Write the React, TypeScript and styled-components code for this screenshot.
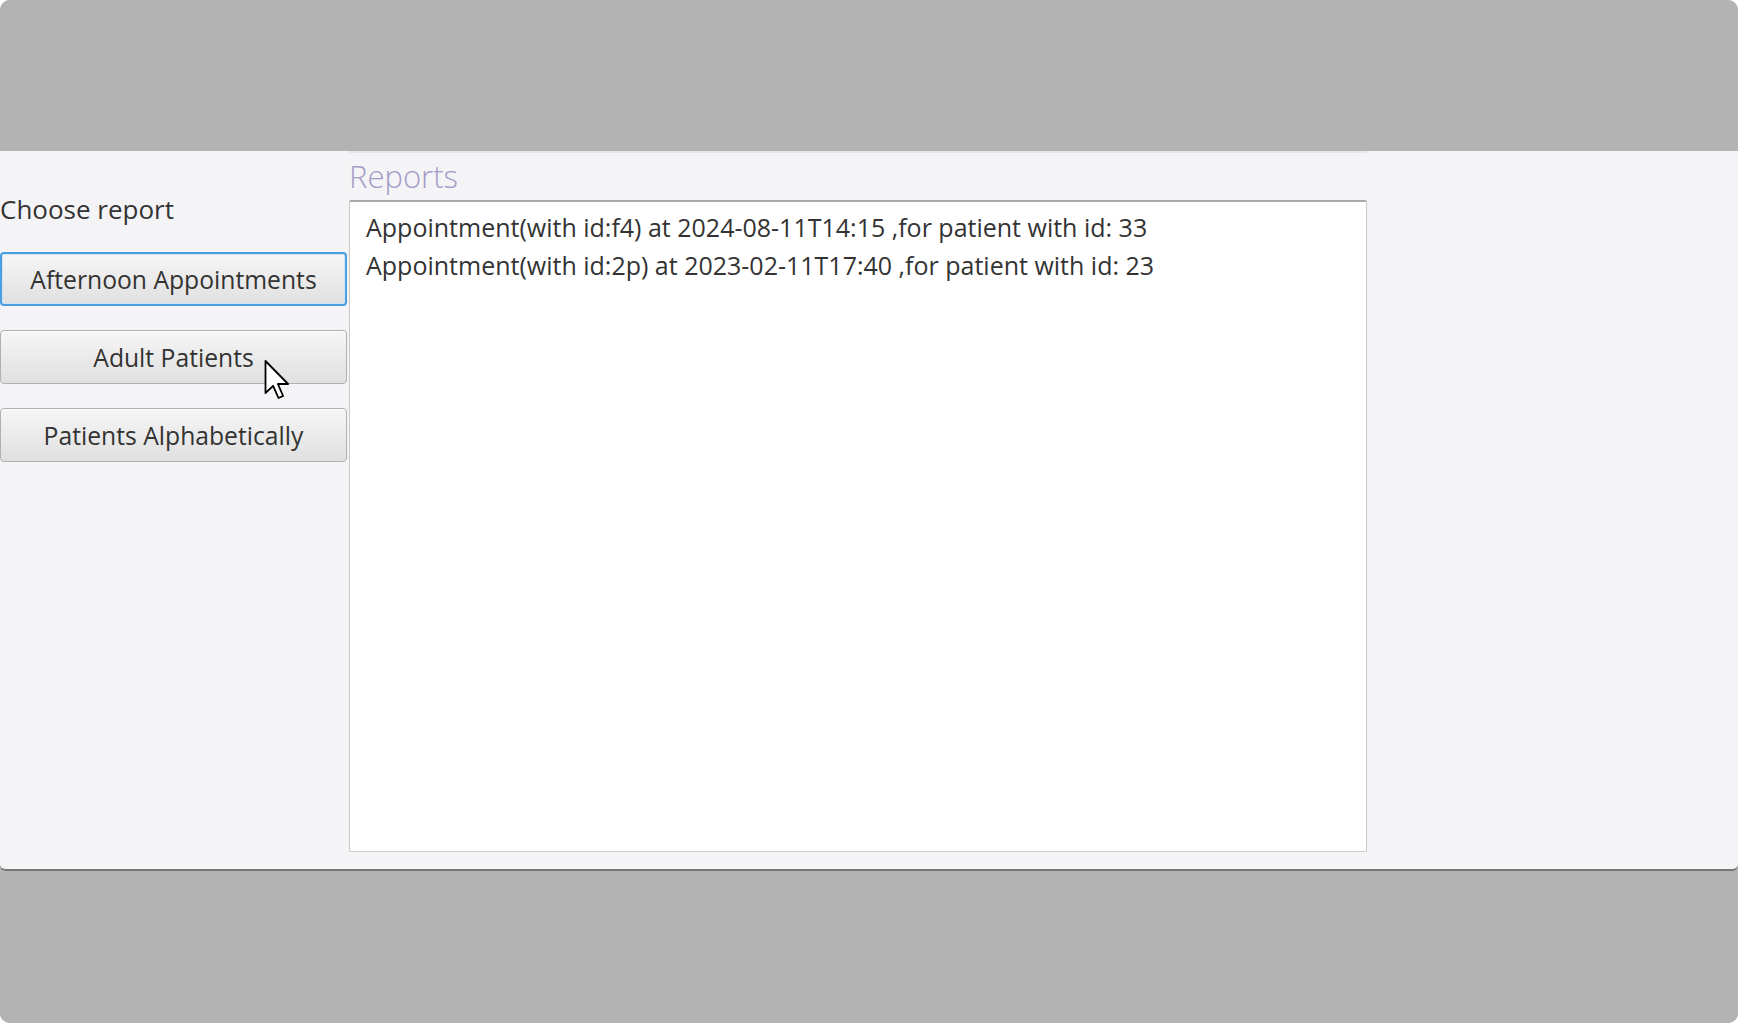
import React from "react";
import styled, { createGlobalStyle } from "styled-components";

const GlobalStyle = createGlobalStyle`
  html, body { margin: 0; padding: 0; background: #ffffff; }
  #root { width: 1738px; height: 1023px; }
`;

const Frame = styled.div`
  position: relative;
  width: 1738px;
  height: 1023px;
  border-radius: 10px;
  overflow: hidden;
  background: #b3b3b3;
  display: flex;
  flex-direction: column;
  font-family: "Open Sans", "Noto Sans", sans-serif;
  color: #333333;
`;

const Band = styled.div<{ $h?: number }>`
  flex: ${(p) => (p.$h ? `0 0 ${p.$h}px` : "1 1 auto")};
  background: #b3b3b3;
`;

const Window = styled.div`
  flex: 0 0 720px;
  box-sizing: border-box;
  background: #f4f3f6;
  border-bottom: 2px solid #767676;
  border-bottom-left-radius: 6px;
  border-bottom-right-radius: 6px;
  display: flex;
  align-items: flex-start;
`;

const LeftColumn = styled.div`
  width: 347px;
  display: flex;
  flex-direction: column;
  padding-top: 42px;
`;

const Label = styled.div`
  font-size: 26px;
  line-height: 32px;
  color: #333333;
  margin-bottom: 27px;
`;

const ButtonStack = styled.div`
  display: flex;
  flex-direction: column;
  gap: 24px;
`;

const ReportButton = styled.button<{ $focused?: boolean }>`
  height: 54px;
  width: 347px;
  box-sizing: border-box;
  border-radius: 4px;
  font-family: "Open Sans", "Noto Sans", sans-serif;
  font-size: 24.7px;
  color: #333333;
  background: linear-gradient(#f6f6f6, #e0e0e0);
  border: ${(p) => (p.$focused ? "2px solid #4a9fe0" : "1px solid #b0b0b0")};
  box-shadow: ${(p) =>
    p.$focused ? "inset 0 0 0 1px #cfe6f8" : "inset 0 1px 0 #ffffff"};
  padding: 0;
  cursor: default;
`;

const RightColumn = styled.div`
  width: 1018px;
  margin-left: 2px;
  display: flex;
  flex-direction: column;
  border-top: 2px solid #e6e5e8;
`;

const SectionTitle = styled.div`
  font-family: "Open Sans", "Noto Sans", sans-serif;
  font-weight: 300;
  font-size: 31px;
  line-height: 47px;
  color: #a49cc6;
`;

const ListBox = styled.div`
  height: 652px;
  box-sizing: border-box;
  background: #ffffff;
  border: 1px solid #c9c9c9;
  border-top: 2px solid #a9a9a9;
  border-radius: 2px;
  padding: 6px 0 0 16px;
  display: flex;
  flex-direction: column;
`;

const ListRow = styled.div`
  font-size: 25px;
  line-height: 38px;
  color: #333333;
  white-space: nowrap;
`;

const Cursor = styled.svg`
  position: absolute;
  left: 264px;
  top: 360px;
  width: 27px;
  height: 40px;
`;

const rows = [
  "Appointment(with id:f4) at 2024-08-11T14:15 ,for patient with id: 33",
  "Appointment(with id:2p) at 2023-02-11T17:40 ,for patient with id: 23",
];

export default function App() {
  return (
    <>
      <GlobalStyle />
      <Frame>
        <Band $h={151} />
        <Window>
          <LeftColumn>
            <Label>Choose report</Label>
            <ButtonStack>
              <ReportButton $focused>Afternoon Appointments</ReportButton>
              <ReportButton>Adult Patients</ReportButton>
              <ReportButton>Patients Alphabetically</ReportButton>
            </ButtonStack>
          </LeftColumn>
          <RightColumn>
            <SectionTitle>Reports</SectionTitle>
            <ListBox>
              {rows.map((r) => (
                <ListRow key={r}>{r}</ListRow>
              ))}
            </ListBox>
          </RightColumn>
        </Window>
        <Band />
        <Cursor viewBox="0 0 13 20">
          <path
            d="M0.5 0.5 L0.5 16.5 L4.3 12.9 L7 19 L9.3 18 L6.7 12 L11.8 12 Z"
            fill="#ffffff"
            stroke="#000000"
            strokeWidth="0.9"
            strokeLinejoin="round"
          />
        </Cursor>
      </Frame>
    </>
  );
}
